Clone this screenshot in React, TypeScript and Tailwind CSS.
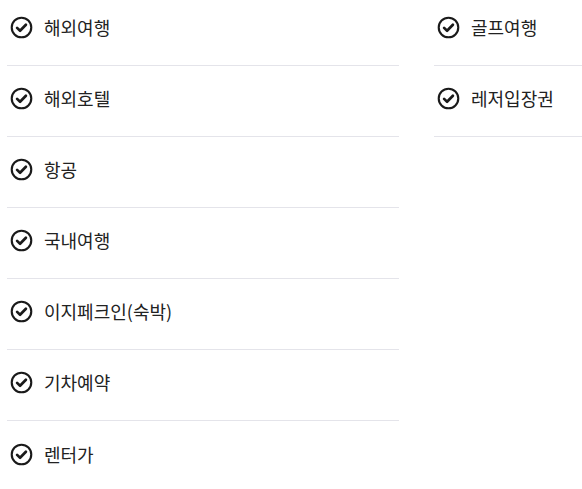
import React from "react";

const left = ["해외여행", "해외호텔", "항공", "국내여행", "이지페크인(숙박)", "기차예약", "렌터가"];
const right = ["골프여행", "레저입장권"];

function Check() {
  return (
    <svg width="23" height="23" viewBox="0 0 24 24" fill="none" className="shrink-0">
      <circle cx="12" cy="12" r="10.2" stroke="#1a1a1a" strokeWidth="2.2" />
      <path d="M7.4 12.4l3.1 3 6.1-6.3" stroke="#1a1a1a" strokeWidth="2.8" strokeLinecap="round" strokeLinejoin="round" />
    </svg>
  );
}

function Row({ label, last }: { label: string; last?: boolean }) {
  return (
    <div className={`flex h-[71px] items-center gap-[11px] pb-[5px] pl-[3px] ${last ? "" : "border-b border-[#e4e4ea]"}`}>
      <Check />
      <span className="text-[18px] text-[#222]" style={{ fontFamily: '"Noto Sans CJK KR", "Noto Sans", sans-serif' }}>
        {label}
      </span>
    </div>
  );
}

export default function App() {
  return (
    <div className="h-[489px] w-[582px] overflow-hidden bg-white">
      <div className="-mt-[5px] ml-[7px] flex gap-[35px]">
        <div className="w-[392px] shrink-0">
          {left.map((l, i) => (
            <Row key={l} label={l} last={i === left.length - 1} />
          ))}
        </div>
        <div className="flex-1">
          {right.map((l) => (
            <Row key={l} label={l} />
          ))}
        </div>
      </div>
    </div>
  );
}
